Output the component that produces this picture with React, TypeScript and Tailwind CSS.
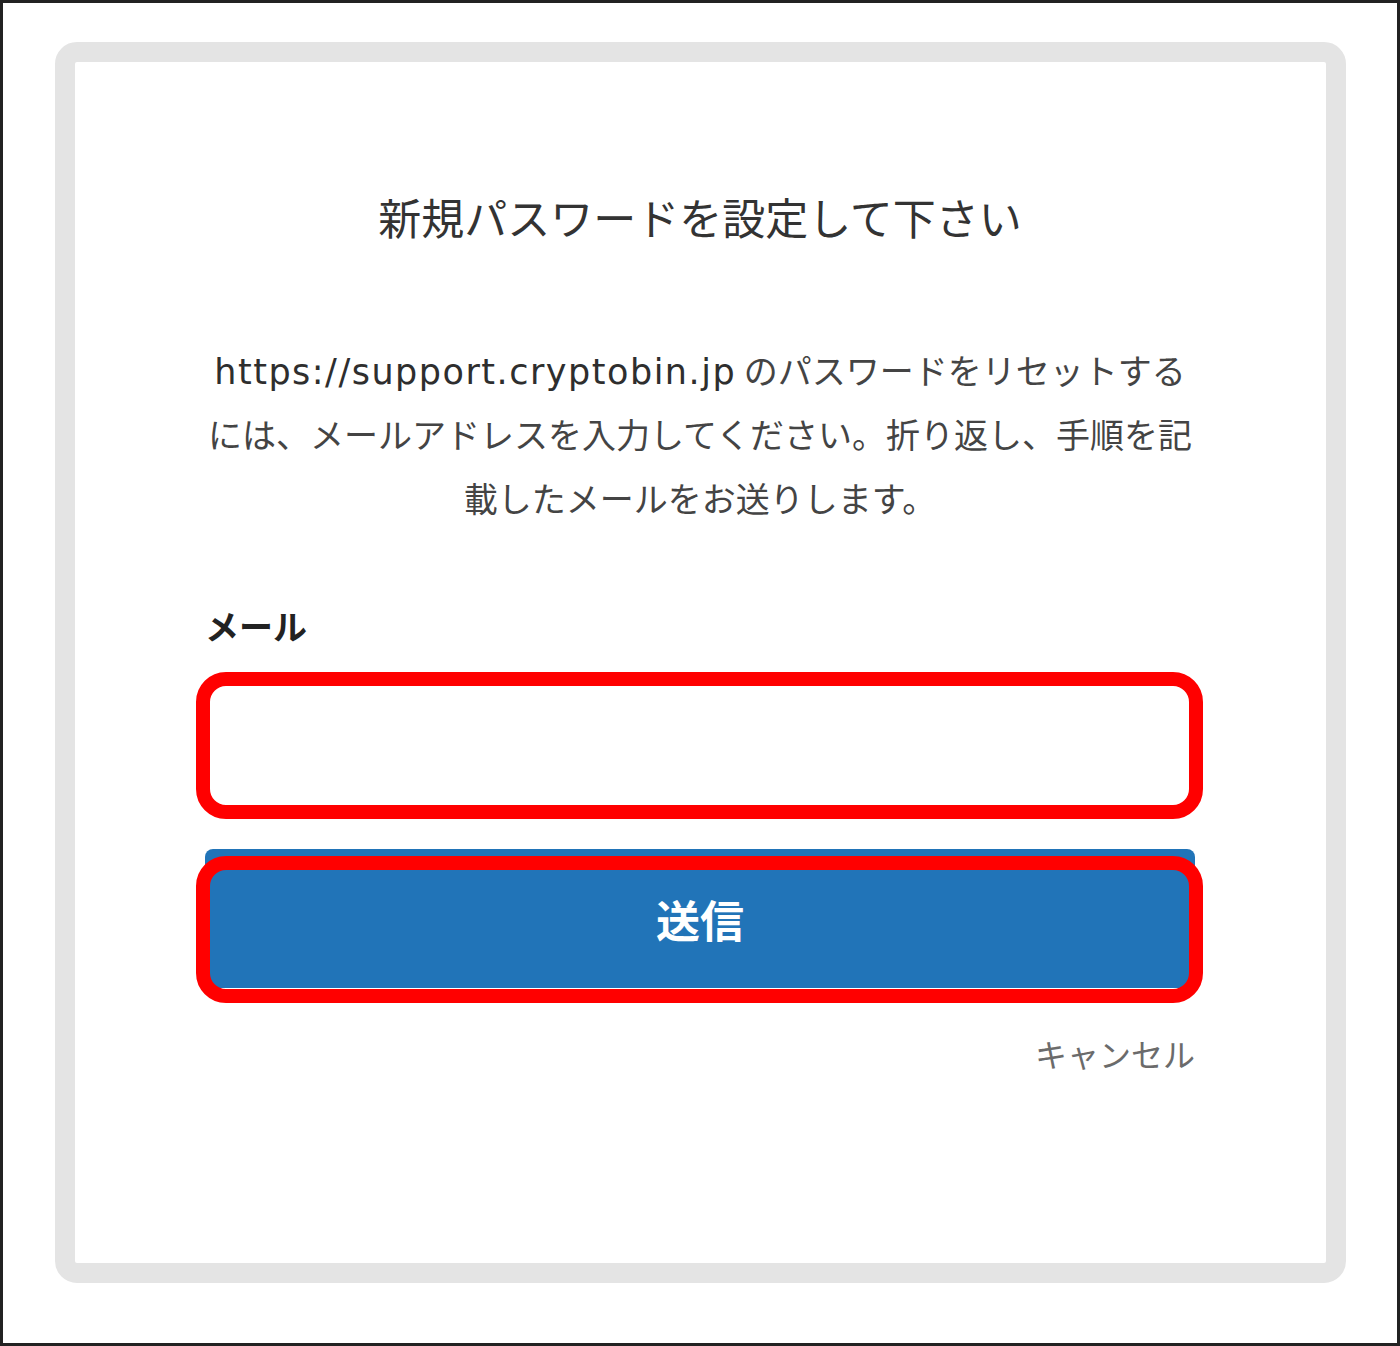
import React, { useState } from "react";

const jp = "font-[Noto_Sans_CJK_JP,Noto_Sans,sans-serif]";

const ResetPasswordCard: React.FC<{ siteUrl: string }> = ({ siteUrl }) => {
  const [email, setEmail] = useState("");

  return (
    <div className="w-[1291px] h-[1241px] border-[20px] border-[#e4e4e4] rounded-[22px] bg-white">
      <div className="ml-[130px] w-[990px] pt-[128px]">
        <h1 className={`${jp} text-center text-[43px] leading-[52px] text-[#333] font-normal`}>
          新規パスワードを設定して下さい
        </h1>

        <p className={`${jp} mt-[96px] text-center text-[34px] leading-[64px] text-[#444]`}>
          <span className="font-[DejaVu_Sans,Noto_Sans,sans-serif] text-[35px] leading-none tracking-[1.5px] text-[#2e2e2e]">
            {siteUrl}
          </span>{" "}
          のパスワードをリセットする
          <br />
          には、メールアドレスを入力してください。折り返し、手順を記
          <br />
          載したメールをお送りします。
        </p>

        <label className={`${jp} block mt-[74px] text-[34px] leading-[44px] font-bold text-[#222]`}>
          メール
        </label>

        <input
          type="email"
          value={email}
          onChange={(e) => setEmail(e.target.value)}
          className="block mt-[24px] -ml-[9px] w-[1007px] h-[147px] border-[14px] border-[#ff0000] rounded-[30px] bg-white outline-none px-6 text-[32px]"
        />

        <div className="relative mt-[30px]">
          <button
            className={`${jp} w-full h-[139px] rounded-[8px] bg-[#2174b8] text-white text-[44px] font-bold`}
          >
            送信
          </button>
          {/* highlight ring around the submit button */}
          <div className="absolute top-[7px] -left-[9px] w-[1007px] h-[147px] border-[14px] border-[#ff0000] rounded-[30px] pointer-events-none" />
        </div>

        <div className="mt-[45px] flex justify-end">
          <a href="#" className={`${jp} text-[32px] leading-[40px] text-[#6b6b6b]`}>
            キャンセル
          </a>
        </div>
      </div>
    </div>
  );
};

export default function App() {
  return (
    <div className="w-[1400px] h-[1346px] border-[3px] border-[#222] bg-white pt-[39px] pl-[52px]">
      <ResetPasswordCard siteUrl="https://support.cryptobin.jp" />
    </div>
  );
}
